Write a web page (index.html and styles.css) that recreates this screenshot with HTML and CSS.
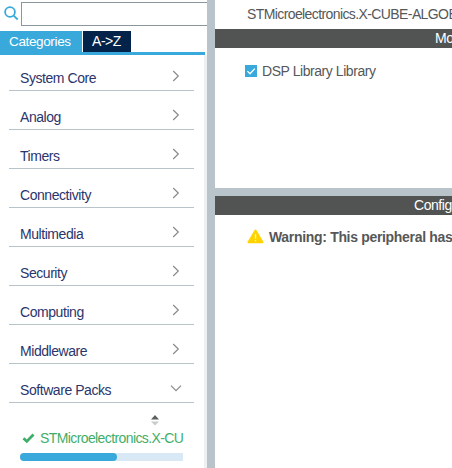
FILE: index.html
```html
<!DOCTYPE html>
<html lang="en">
<head>
<meta charset="utf-8">
<title>Software Packs</title>
<link rel="stylesheet" href="styles.css">
</head>
<body>
<div class="app">
  <aside class="sidebar">
    <div class="search">
      <svg class="search-icon" width="15" height="15" viewBox="0 0 15 15"><circle cx="6" cy="6" r="4.9"/><path d="M9.6 9.6L13.7 13.5"/></svg>
      <div class="search-box"></div>
    </div>
    <nav class="tabs"><span class="tab tab-active">Categories</span><span class="tab tab-az">A-&gt;Z</span></nav>
    <div class="list">
      <div class="row"><span>System Core</span><svg class="chevron" width="12" height="12" viewBox="0 0 12 12"><path d="M3.2 1L8.3 6L3.2 11"/></svg></div>
      <div class="row"><span>Analog</span><svg class="chevron" width="12" height="12" viewBox="0 0 12 12"><path d="M3.2 1L8.3 6L3.2 11"/></svg></div>
      <div class="row"><span>Timers</span><svg class="chevron" width="12" height="12" viewBox="0 0 12 12"><path d="M3.2 1L8.3 6L3.2 11"/></svg></div>
      <div class="row"><span>Connectivity</span><svg class="chevron" width="12" height="12" viewBox="0 0 12 12"><path d="M3.2 1L8.3 6L3.2 11"/></svg></div>
      <div class="row"><span>Multimedia</span><svg class="chevron" width="12" height="12" viewBox="0 0 12 12"><path d="M3.2 1L8.3 6L3.2 11"/></svg></div>
      <div class="row"><span>Security</span><svg class="chevron" width="12" height="12" viewBox="0 0 12 12"><path d="M3.2 1L8.3 6L3.2 11"/></svg></div>
      <div class="row"><span>Computing</span><svg class="chevron" width="12" height="12" viewBox="0 0 12 12"><path d="M3.2 1L8.3 6L3.2 11"/></svg></div>
      <div class="row"><span>Middleware</span><svg class="chevron" width="12" height="12" viewBox="0 0 12 12"><path d="M3.2 1L8.3 6L3.2 11"/></svg></div>
      <div class="row"><span>Software Packs</span><svg class="chevron" width="12" height="12" viewBox="0 0 12 12"><path d="M1 3.6L6 8.6L11 3.6"/></svg></div>
      <div class="packs">
        <svg class="sorter" width="8" height="11" viewBox="0 0 8 11"><path d="M4 0L8 4.5H0Z" fill="#5d5f5f"/><path d="M0 6.5H8L4 10.5Z" fill="#c9cbcc"/></svg>
        <div class="pack">
          <svg width="13" height="11" viewBox="0 0 13 11"><path d="M1.5 5.2L4.8 8.4L11.5 1.6" fill="none" stroke="#3fae6a" stroke-width="2.8"/></svg>
          <span>STMicroelectronics.X-CU</span>
        </div>
        <div class="scroll"><div class="thumb"></div></div>
      </div>
    </div>
  </aside>
  <main class="main">
    <section class="mode">
      <div class="title">STMicroelectronics.X-CUBE-ALGOBUILD</div>
      <div class="bar bar-mode">Mode</div>
      <div class="option">
        <svg width="12" height="12" viewBox="0 0 12 12"><path d="M0 0H12V12H0Z" fill="#39a9dc"/><path d="M2.4 6.1L5 8.7L9.8 3.6" fill="none" stroke="#fff" stroke-width="1.3"/></svg>
        <span>DSP Library Library</span>
      </div>
    </section>
    <section class="config">
      <div class="bar bar-config">Configuration</div>
      <div class="warning">
        <svg width="17" height="15" viewBox="0 0 17 15"><path d="M8.5 1.5L15.5 13.2H1.5Z" fill="#ffd200" stroke="#ffd200" stroke-width="2" stroke-linejoin="round"/><path d="M8.5 5V9.8M8.5 11V12.4" stroke="#fff3b0" stroke-width="1.3"/></svg>
        <span>Warning: This peripheral has no parameters</span>
      </div>
    </section>
  </main>
</div>
</body>
</html>
```
FILE: styles.css
```css
* { box-sizing: border-box; }
body {
  margin: 0;
  overflow: hidden;
  background: #fff;
  color: #555758;
  font: 14px/18px "Liberation Sans", Arial, sans-serif;
  letter-spacing: -.44px;
  white-space: nowrap;
}
.app { display: flex; width: 452px; height: 468px; overflow: hidden; }
.sidebar { flex: none; width: 207px; overflow: hidden; }
.search { display: flex; height: 31px; padding: 2px 0 0 4px; }
.search-icon { flex: none; margin: 4px 2px 0 0; fill: none; stroke: #39a9dc; stroke-width: 1.8; }
.search-box { flex: 1; height: 24px; border: 1px solid #8b969d; border-right: 0; }
.tabs { display: flex; gap: 1px; width: 205px; height: 24px; border-bottom: 3px solid #39a9dc; }
.tab { height: 21px; line-height: 21px; color: #fff; }
.tab-active { width: 82px; padding-left: 9px; background: #39a9dc; font-size: 13.5px; letter-spacing: -.36px; }
.tab-az { width: 48px; padding-left: 9px; background: #03234b; }
.list { height: 413px; padding: 0 10px 0 9px; border-right: 3px solid #eef1f3; }
.row {
  display: flex;
  justify-content: space-between;
  height: 39px;
  padding: 17px 12px 0 11px;
  border-bottom: 1px solid #b9c4ca;
  color: #2b356c;
}
.row:first-child { height: 36px; padding-top: 14px; }
.chevron { flex: none; margin-top: 1px; fill: none; stroke: #8a8a8a; stroke-width: 1.2; }
.packs { width: 174px; padding: 12px 0 0 11px; }
.sorter { display: block; margin-left: 131px; }
.pack { display: flex; align-items: center; gap: 5px; margin: 3px 0 0 2px; color: #3fae6a; letter-spacing: -.6px; }
.pack svg { flex: none; }
.scroll { height: 8px; margin-top: 6px; border-radius: 4px 0 0 4px; background: #d8e8f5; }
.thumb { width: 97px; height: 8px; border-radius: 4px; background: #39a9dc; }
.main { flex: none; width: 237px; border-left: 8px solid #b9c4ca; box-sizing: content-box; }
.mode { height: 196px; border-bottom: 8px solid #b9c4ca; }
.title { height: 29px; padding: 5px 0 0 32px; letter-spacing: -.6px; }
.bar { height: 19px; line-height: 19px; background: #525453; color: #fff; }
.bar-mode { padding-left: 220px; }
.bar-config { padding-left: 199px; }
.option { display: flex; gap: 5px; padding: 15px 0 0 30px; }
.option svg { flex: none; margin-top: 2px; }
.option span { margin-top: -1px; }
.warning { display: flex; gap: 5px; padding: 14px 0 0 32px; font-weight: bold; letter-spacing: -.32px; }
.warning svg { flex: none; }
.warning span { margin-top: -1px; }
```
